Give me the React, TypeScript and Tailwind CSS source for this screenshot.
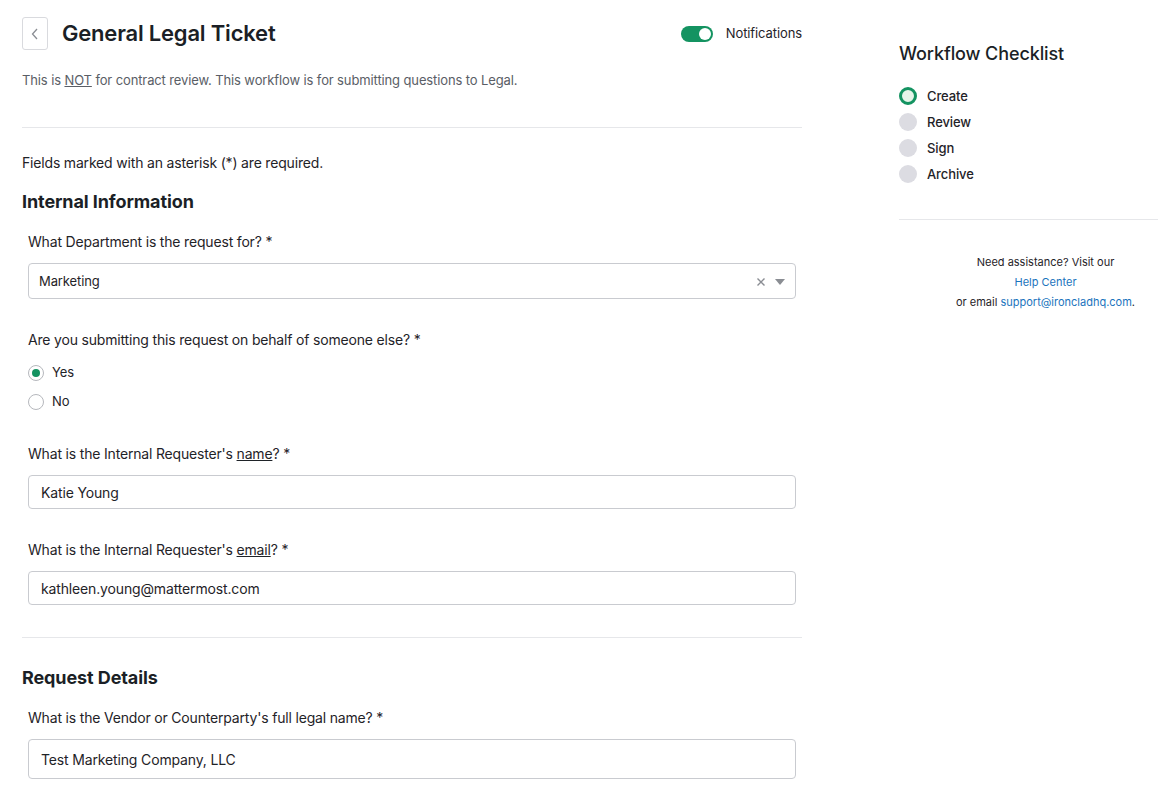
import React from "react";

function Field({ label, children }: { label: React.ReactNode; children: React.ReactNode }) {
  return (
    <div className="px-[6px]">
      <div className="text-[14px] leading-[20px] tracking-[-0.18px] text-[#1f2328]">{label}</div>
      {children}
    </div>
  );
}

function TextInput({ value, h = "h-[34px]" }: { value: string; h?: string }) {
  return (
    <div className={`mt-[11px] ${h} flex items-center rounded-[4px] border border-[#c9cbd0] px-[12px] text-[14px] tracking-[-0.15px] text-[#1f2328]`}>
      {value}
    </div>
  );
}

export default function App() {
  return (
    <div className="flex min-h-[797px] bg-white text-[#1f2328]" style={{ fontFamily: "Inter, 'Noto Sans', sans-serif" }}>
      <div className="ml-[22px] w-[780px] shrink-0">
        <div className="flex h-[67px] items-center pt-[0px]">
          <div className="flex h-[33px] w-[26px] items-center justify-center rounded-[3px] border border-[#d9dade]">
            <svg width="8" height="12" viewBox="0 0 8 12" fill="none">
              <path d="M6 1L1.5 6L6 11" stroke="#8a8d93" strokeWidth="1.3" />
            </svg>
          </div>
          <div className="ml-[14px] text-[22px] font-semibold tracking-[-0.2px] text-[#1b1f26]">General Legal Ticket</div>
          <div className="ml-auto flex items-center self-start pt-[24px]">
            <div className="relative h-[16px] w-[32px] rounded-full bg-[#149361]">
              <div className="absolute right-[2px] top-[2px] h-[12px] w-[12px] rounded-full bg-white" />
            </div>
            <span className="ml-[13px] text-[13px] tracking-[-0.1px] text-[#1f2328]">Notifications</span>
          </div>
        </div>
        <div className="mt-[4px] text-[13px] leading-[18px] tracking-[-0.12px] text-[#5a5e66]">
          This is <span className="underline">NOT</span> for contract review. This workflow is for submitting questions to Legal.
        </div>
        <div className="mt-[38px] h-px bg-[#e6e7ea]" />
        <div className="mt-[25px] text-[14px] leading-[20px] tracking-[-0.18px]">Fields marked with an asterisk (*) are required.</div>
        <div className="mt-[18px] text-[18px] font-bold leading-[22px] tracking-[-0.1px] text-[#1b1f26]">Internal Information</div>
        <div className="mt-[19px]">
          <Field label="What Department is the request for? *">
            <div className="mt-[11px] flex h-[36px] items-center rounded-[4px] border border-[#c9cbd0] pl-[10px] pr-[10px] pt-[1px] text-[13px] tracking-[-0.1px]">
              <span>Marketing</span>
              <span className="ml-auto flex items-center gap-[9px]">
                <svg width="10" height="10" viewBox="0 0 10 10">
                  <path d="M1.5 1.5L8.5 8.5M8.5 1.5L1.5 8.5" stroke="#8a8d93" strokeWidth="1.4" />
                </svg>
                <svg width="10" height="6" viewBox="0 0 10 6">
                  <path d="M0 0H10L5 6Z" fill="#8a8d93" />
                </svg>
              </span>
            </div>
          </Field>
        </div>
        <div className="mt-[31px]">
          <Field label="Are you submitting this request on behalf of someone else? *">
            <div className="mt-[13px] flex flex-col gap-[9px] text-[13px] tracking-[-0.1px]">
              <div className="flex h-[20px] items-center gap-[8px]">
                <div className="flex h-[16px] w-[16px] items-center justify-center rounded-full border border-[#b6b8bd]">
                  <div className="h-[8px] w-[8px] rounded-full bg-[#149361]" />
                </div>
                <span>Yes</span>
              </div>
              <div className="flex h-[20px] items-center gap-[8px]">
                <div className="h-[16px] w-[16px] rounded-full border border-[#b6b8bd]" />
                <span>No</span>
              </div>
            </div>
          </Field>
        </div>
        <div className="mt-[32px]">
          <Field label={<>What is the Internal Requester's <span className="underline">name</span>? *</>}>
            <TextInput value="Katie Young" />
          </Field>
        </div>
        <div className="mt-[31px]">
          <Field label={<>What is the Internal Requester's <span className="underline">email</span>? *</>}>
            <TextInput value="kathleen.young@mattermost.com" />
          </Field>
        </div>
        <div className="mt-[32px] h-px bg-[#e6e7ea]" />
        <div className="mt-[29px] text-[18px] font-bold leading-[22px] tracking-[-0.1px] text-[#1b1f26]">Request Details</div>
        <div className="mt-[19px]">
          <Field label="What is the Vendor or Counterparty's full legal name? *">
            <TextInput value="Test Marketing Company, LLC" h="h-[40px]" />
          </Field>
        </div>
      </div>
      <div className="ml-[97px] flex-1">
        <div className="mt-[43px] text-[18px] font-medium leading-[22px] tracking-[-0.1px] text-[#1b1f26]">Workflow Checklist</div>
        <div className="mt-[22px] flex flex-col gap-[8px] text-[13px] font-medium leading-[18px] tracking-[-0.1px]">
          <div className="flex items-center gap-[10px]">
            <div className="h-[18px] w-[18px] rounded-full border-[3px] border-[#149361] bg-[#e6f5ea]" />
            <span>Create</span>
          </div>
          {["Review", "Sign", "Archive"].map((s) => (
            <div key={s} className="flex items-center gap-[10px]">
              <div className="h-[18px] w-[18px] rounded-full bg-[#dcdce2]" />
              <span>{s}</span>
            </div>
          ))}
        </div>
        <div className="mt-[36px] h-px bg-[#e6e7ea]" />
        <div className="mt-[32px] pl-[34px] text-center text-[11px] leading-[20px] text-[#1f2328]">
          <div>Need assistance? Visit our</div>
          <div className="text-[#1b74bd]">Help Center</div>
          <div>
            or email <span className="text-[#1b74bd]">support@ironcladhq.com</span>.
          </div>
        </div>
      </div>
    </div>
  );
}
